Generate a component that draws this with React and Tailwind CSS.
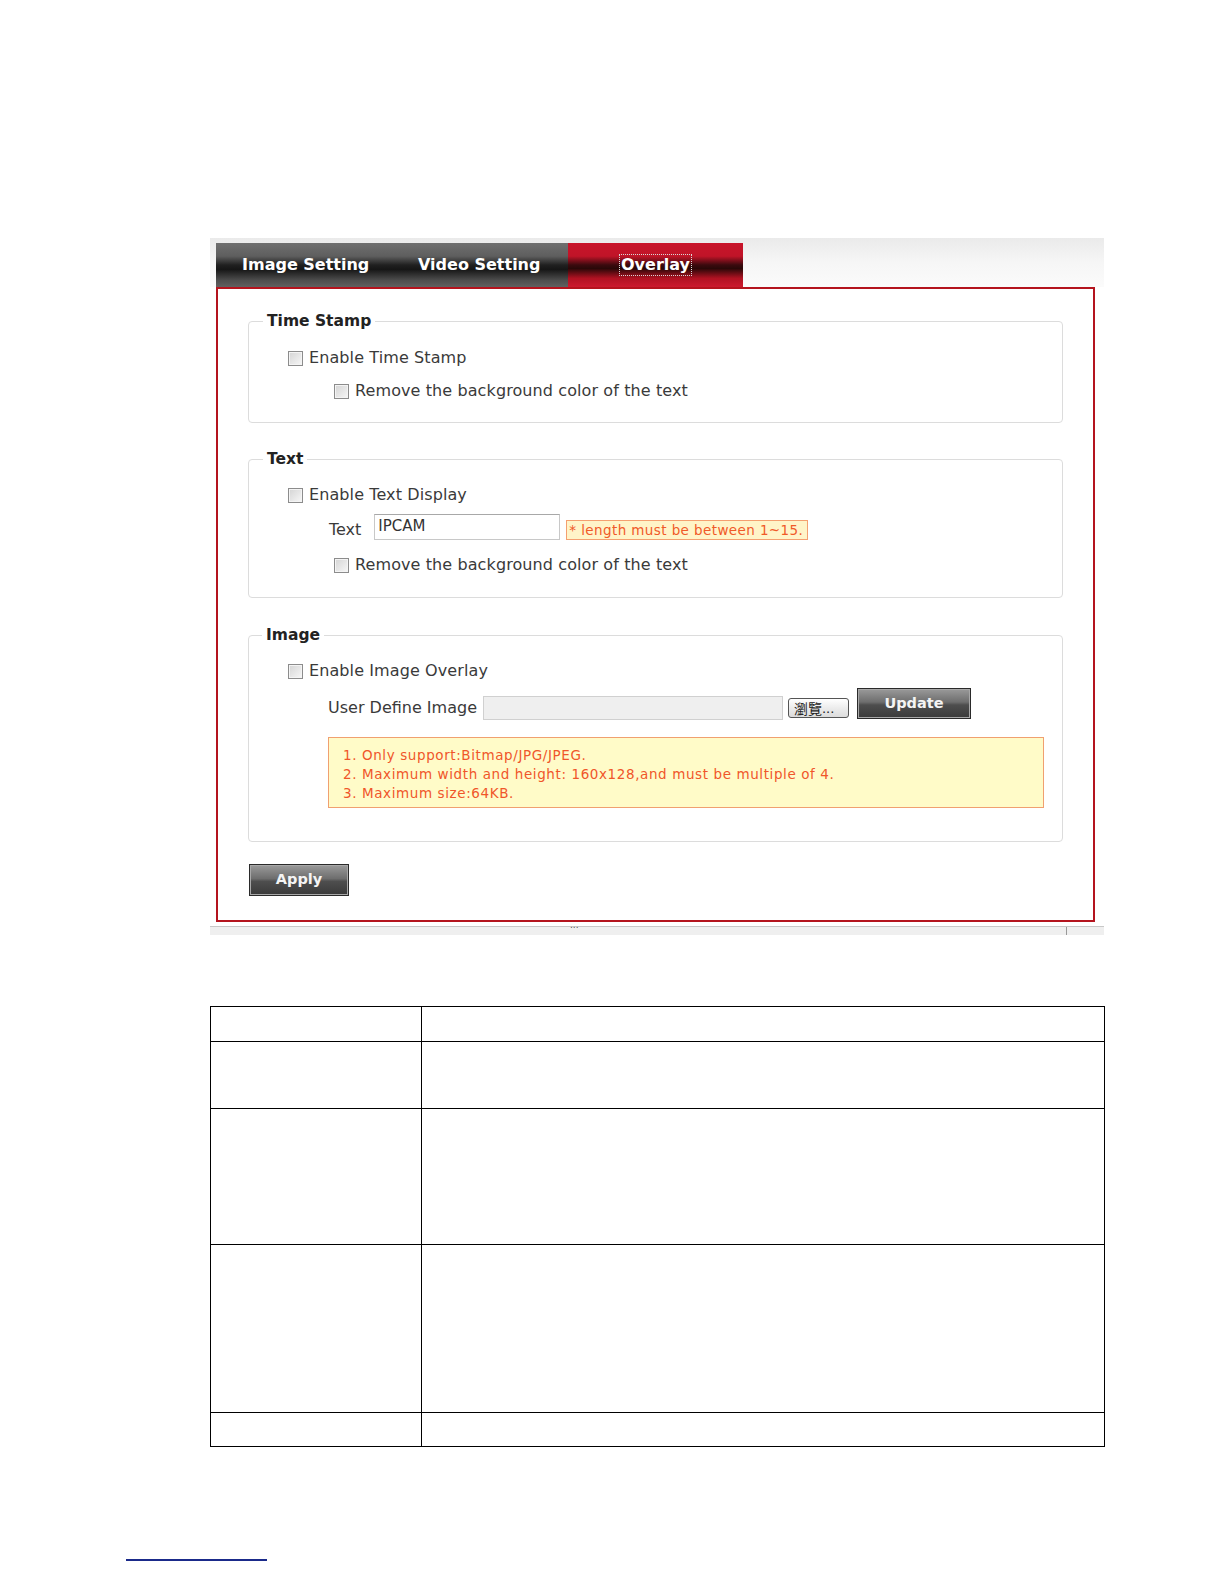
import React from "react";

const F = { fontFamily: '"DejaVu Sans", Verdana, sans-serif' };

function Check() {
  return (
    <span className="inline-block w-[15px] h-[15px] border border-[#8c8c8c] bg-[linear-gradient(135deg,#d4d4d4_0%,#e9e9e9_60%,#f7f7f7_100%)] shadow-[inset_0_0_0_1px_#f4f4f4] shrink-0" />
  );
}

function CheckRow({ label, indent, mt }) {
  return (
    <div className={`flex items-center h-[22px] ${indent} ${mt}`}>
      <Check />
      <span className="ml-[6px] text-[16px] tracking-[0.1px] text-[#3a3a3a]">{label}</span>
    </div>
  );
}

function Legend({ children, ml }) {
  return (
    <legend className={`${ml} px-[4px] h-[20px] leading-[20px] text-[15.5px] font-bold text-[#222]`}>
      {children}
    </legend>
  );
}

function DarkButton({ children, w, h }) {
  return (
    <div
      className={`${w} ${h} flex items-center justify-center border border-[#2a2a2a] shadow-[inset_0_0_0_1px_#a8a8a8] bg-[linear-gradient(to_bottom,#9a9a9a_0%,#6e6e6e_45%,#4e4e4e_55%,#3a3a3a_100%)] text-[#f4f4f4] text-[14.5px] font-semibold`}
    >
      {children}
    </div>
  );
}

export default function App() {
  return (
    <div className="w-[1224px] h-[1584px] bg-white relative" style={F}>
      <div className="pt-[238px] pl-[210px]">
        {/* Screenshot */}
        <div className="w-[894px]">
          <div className="h-[49px] bg-[linear-gradient(to_bottom,#eaeaea_0%,#f6f6f6_50%,#fbfbfb_100%)] pt-[5px] pl-[6px]">
            <div className="flex h-[44px] w-[527px]">
              <div className="w-[176px] h-full flex items-center pl-[26px] text-white font-bold text-[16px] bg-[linear-gradient(to_bottom,#707070_0%,#5e5e5e_30%,#202020_50%,#161616_60%,#4e4e4e_85%,#606060_100%)]">
                Image Setting
              </div>
              <div className="w-[176px] h-full flex items-center pl-[26px] text-white font-bold text-[16px] bg-[linear-gradient(to_bottom,#707070_0%,#5e5e5e_30%,#202020_50%,#161616_60%,#4e4e4e_85%,#606060_100%)]">
                Video Setting
              </div>
              <div className="w-[175px] h-full flex items-center justify-center text-white font-bold text-[16px] bg-[linear-gradient(to_bottom,#c8142a_0%,#c01428_30%,#3a0a0e_50%,#2a0808_58%,#b01222_80%,#cc1a2e_100%)]">
                <span className="outline-1 outline-dotted outline-[#d8d8d8] px-[1px] leading-[20px]">
                  Overlay
                </span>
              </div>
            </div>
          </div>

          {/* Red frame */}
          <div className="ml-[6px] w-[879px] h-[635px] border-2 border-[#b4141e] bg-white pl-[30px] pr-[29px] pt-[22px]">
            {/* Time Stamp */}
            <fieldset className="border border-[#dcdcdc] rounded-[4px] pb-[20px] m-0 p-0 w-[815px]">
              <Legend ml="ml-[14px]">Time Stamp</Legend>
              <CheckRow label="Enable Time Stamp" indent="ml-[39px]" mt="mt-[16px]" />
              <CheckRow
                label="Remove the background color of the text"
                indent="ml-[85px]"
                mt="mt-[11px]"
              />
            </fieldset>

            {/* Text */}
            <fieldset className="border border-[#dcdcdc] rounded-[4px] pb-[21px] m-0 p-0 mt-[26px] w-[815px]">
              <Legend ml="ml-[14px]">Text</Legend>
              <CheckRow label="Enable Text Display" indent="ml-[39px]" mt="mt-[15px]" />
              <div className="flex items-center h-[26px] mt-[8px] ml-[80px]">
                <span className="text-[16px] text-[#3a3a3a] mt-[5px]">Text</span>
                <div className="ml-[13px] w-[186px] h-[26px] border border-[#c8c8c8] border-t-[#a8a8a8] bg-white pl-[3px] text-[15px] text-[#333] leading-[22px]">
                  IPCAM
                </div>
                <div className="ml-[6px] mt-[6px] h-[20px] w-[242px] border border-[#f4a070] bg-[#fff4c8] pl-[2px] text-[13.5px] tracking-[0.4px] text-[#f05a28] leading-[18px] whitespace-nowrap">
                  * length must be between 1~15.
                </div>
              </div>
              <CheckRow
                label="Remove the background color of the text"
                indent="ml-[85px]"
                mt="mt-[14px]"
              />
            </fieldset>

            {/* Image */}
            <fieldset className="border border-[#dcdcdc] rounded-[4px] pb-[33px] m-0 p-0 mt-[27px] w-[815px]">
              <Legend ml="ml-[13px]">Image</Legend>
              <CheckRow label="Enable Image Overlay" indent="ml-[39px]" mt="mt-[15px]" />
              <div className="flex items-start h-[32px] mt-[6px] ml-[79px]">
                <span className="text-[16px] text-[#3a3a3a] mt-[9px] leading-[22px]">
                  User Define Image
                </span>
                <div className="ml-[6px] mt-[8px] w-[300px] h-[24px] border border-[#d0d0d0] bg-[#efefef]" />
                <div className="ml-[5px] mt-[10px] w-[61px] h-[20px] rounded-[3px] border border-[#555] bg-[linear-gradient(to_bottom,#ffffff_0%,#ececec_50%,#dcdcdc_100%)] flex items-center pl-[5px] text-[13px] text-[#222] leading-none">
                  <span style={{ fontFamily: '"Noto Sans CJK TC", sans-serif' }} className="text-[14px]">瀏覽</span>
                  <span>...</span>
                </div>
                <div className="ml-[8px]">
                  <DarkButton w="w-[114px]" h="h-[31px]">Update</DarkButton>
                </div>
              </div>
              <div className="ml-[79px] mt-[17px] w-[716px] h-[71px] border border-[#f0a070] bg-[#fffbc8] pl-[14px] pt-[8px] text-[13.5px] tracking-[0.6px] text-[#f0562a] leading-[19px] whitespace-nowrap">
                <div>1. Only support:Bitmap/JPG/JPEG.</div>
                <div>2. Maximum width and height: 160x128,and must be multiple of 4.</div>
                <div>3. Maximum size:64KB.</div>
              </div>
            </fieldset>

            <div className="mt-[22px] ml-[1px]">
              <DarkButton w="w-[100px]" h="h-[32px]">Apply</DarkButton>
            </div>
          </div>

          {/* bottom bar */}
          <div className="mt-[4px] h-[9px] flex border-t border-[#c8c8c8] bg-[#efefef]">
            <div className="w-[856px] relative">
              <span className="absolute left-[360px] top-[-6px] text-[9px] text-[#555] leading-none">...</span>
            </div>
            <div className="border-l border-[#999] h-full" />
          </div>
        </div>

        {/* Table */}
        <table className="mt-[71px] w-[895px] border-collapse">
          <tbody>
            {[35, 67, 136, 168, 34].map((h, i) => (
              <tr key={i} style={{ height: h }}>
                <td className="w-[211px] border-[1.5px] border-black"></td>
                <td className="border-[1.5px] border-black"></td>
              </tr>
            ))}
          </tbody>
        </table>
      </div>

      {/* footer link underline */}
      <div className="mt-[112px] ml-[126px] w-[141px] h-[2px] bg-[#1a2a8a]" />
    </div>
  );
}
